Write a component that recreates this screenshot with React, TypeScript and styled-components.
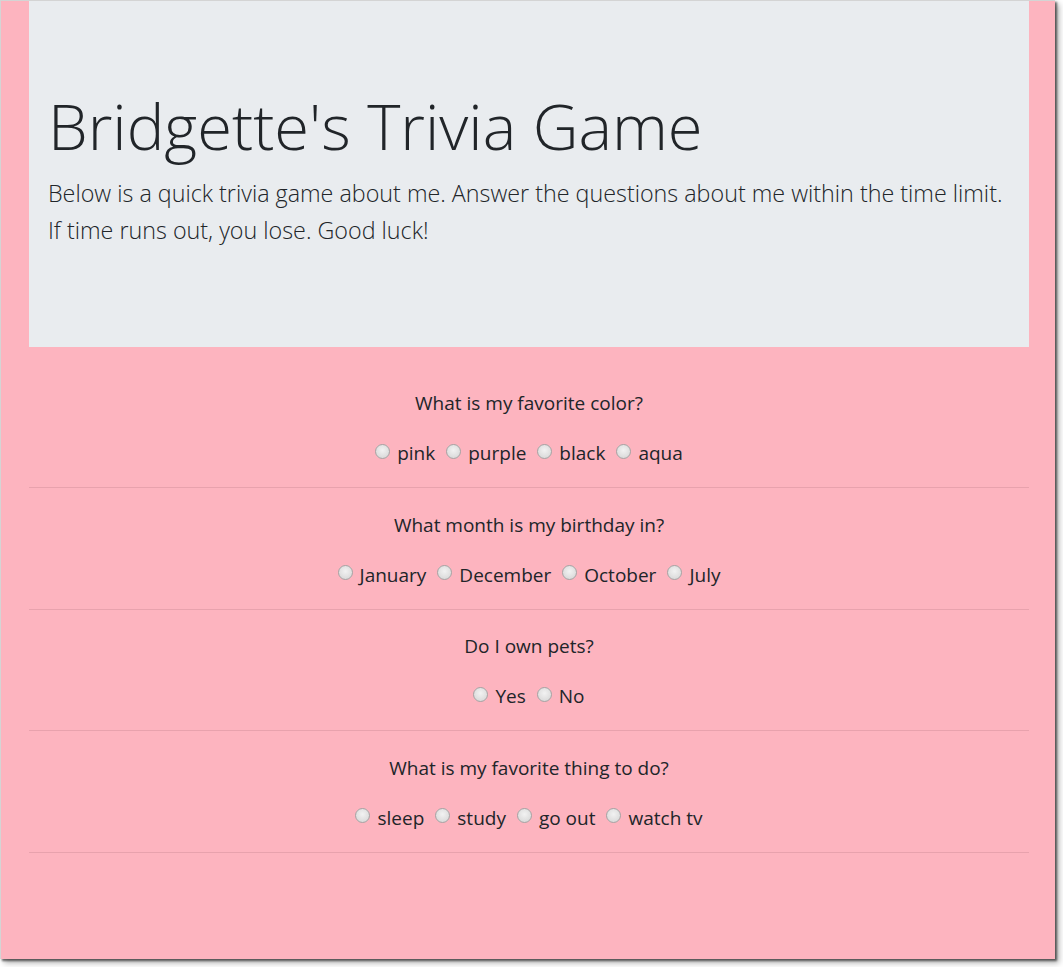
import React from "react";
import styled, { createGlobalStyle } from "styled-components";

const GlobalStyle = createGlobalStyle`
  html, body { margin: 0; padding: 0; background: #ffffff; }
  body { font-family: "Open Sans", "Noto Sans", sans-serif; color: #212529; min-height: 967px; }
  * { box-sizing: border-box; }
`;

const Page = styled.div`
  width: 1063px;
  height: 967px;
`;

const Frame = styled.div`
  width: 1055px;
  height: 959px;
  background: #fdb4bf;
  border-top: 1px solid #d4d4d4;
  border-left: 1px solid #d4d4d4;
  box-shadow: 2px 2px 2px rgba(0, 0, 0, 0.55), 4px 4px 6px rgba(0, 0, 0, 0.3);
  overflow: hidden;
`;

const Container = styled.div`
  width: 1000px;
  margin-left: 28px;
`;

const Jumbotron = styled.header`
  height: 346px;
  background: #e9ecef;
  padding: 83px 20px 0 20px;
`;

const Title = styled.h1`
  margin: 0 0 0 -1px;
  font-size: 63.3px;
  font-weight: 300;
  line-height: 84px;
  color: #212529;
`;

const Lead = styled.p`
  margin: 7px 0 0 -1px;
  font-size: 23.3px;
  font-weight: 300;
  line-height: 37px;
  color: #212529;
`;

const Quiz = styled.main`
  padding-top: 19.5px;
`;

const Block = styled.section`
  padding-top: 24.5px;
  text-align: center;
`;

const Question = styled.p`
  margin: 0 0 26px;
  font-size: 19px;
  line-height: 24px;
`;

const Options = styled.div`
  display: flex;
  justify-content: center;
  align-items: center;
  gap: 11px;
  font-size: 19px;
  line-height: 24px;
`;

const Option = styled.label`
  display: inline-flex;
  align-items: center;
  gap: 7px;
`;

const Radio = styled.input.attrs({ type: "radio" })`
  appearance: none;
  -webkit-appearance: none;
  margin: 0;
  width: 15px;
  height: 15px;
  border-radius: 50%;
  border: 1px solid #a4a4a4;
  background: radial-gradient(circle at 50% 40%, #f2f2f2 0%, #dedede 65%, #d2d2d2 100%);
  position: relative;
  top: -2px;
`;

const Rule = styled.hr`
  margin: 22px 0 0;
  border: 0;
  border-top: 1px solid #e8a2ad;
`;

const questions = [
  { q: "What is my favorite color?", name: "color", options: ["pink", "purple", "black", "aqua"] },
  { q: "What month is my birthday in?", name: "month", options: ["January", "December", "October", "July"] },
  { q: "Do I own pets?", name: "pets", options: ["Yes", "No"] },
  { q: "What is my favorite thing to do?", name: "thing", options: ["sleep", "study", "go out", "watch tv"] },
];

export default function App() {
  return (
    <Page>
      <GlobalStyle />
      <Frame>
        <Container>
          <Jumbotron>
            <Title>Bridgette's Trivia Game</Title>
            <Lead>
              Below is a quick trivia game about me. Answer the questions about me within the time limit.
              <br />
              If time runs out, you lose. Good luck!
            </Lead>
          </Jumbotron>
          <Quiz>
            {questions.map((item) => (
              <Block key={item.name}>
                <Question>{item.q}</Question>
                <Options>
                  {item.options.map((o) => (
                    <Option key={o}>
                      <Radio name={item.name} value={o} />
                      {o}
                    </Option>
                  ))}
                </Options>
                <Rule />
              </Block>
            ))}
          </Quiz>
        </Container>
      </Frame>
    </Page>
  );
}
